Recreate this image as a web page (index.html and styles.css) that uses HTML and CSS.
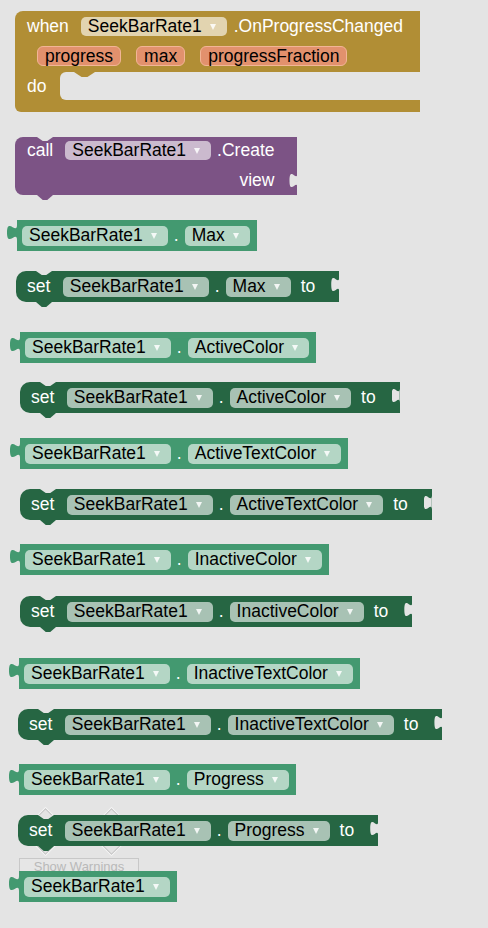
FILE: index.html
```html
<!DOCTYPE html>
<html>
<head>
<meta charset="utf-8">
<link rel="stylesheet" href="styles.css">
</head>
<body>
<div class="overlay">
  <div class="diamond d1"></div>
  <div class="diamond d2"></div>
  <div class="warn-btn">Show Warnings</div>
</div>
<div class="ws">
  <div class="blk event">
    <div class="ev-head"><span class="lbl kw">when</span><span class="fld">SeekBarRate1<i class="arr"></i></span><span class="lbl meth">.OnProgressChanged</span></div>
    <div class="ev-params"><span class="prm">progress</span><span class="prm">max</span><span class="prm">progressFraction</span></div>
    <div class="ev-do"><span class="lbl do">do</span><div class="slot"></div></div>
  </div>

  <div class="blk call">
    <div class="call-head"><span class="lbl kw">call</span><span class="fld">SeekBarRate1<i class="arr"></i></span><span class="lbl meth">.Create</span></div>
    <div class="call-arg"><span class="lbl">view</span></div>
  </div>

  <div class="blk getter g-max"><span class="fld">SeekBarRate1<i class="arr"></i></span><span class="dot">.</span><span class="fld">Max<i class="arr"></i></span></div>
  <div class="blk setter s-max"><span class="lbl kw">set</span><span class="fld">SeekBarRate1<i class="arr"></i></span><span class="dot">.</span><span class="fld">Max<i class="arr"></i></span><span class="lbl to">to</span></div>

  <div class="blk getter g-ac"><span class="fld">SeekBarRate1<i class="arr"></i></span><span class="dot">.</span><span class="fld">ActiveColor<i class="arr"></i></span></div>
  <div class="blk setter s-ac"><span class="lbl kw">set</span><span class="fld">SeekBarRate1<i class="arr"></i></span><span class="dot">.</span><span class="fld">ActiveColor<i class="arr"></i></span><span class="lbl to">to</span></div>

  <div class="blk getter g-atc"><span class="fld">SeekBarRate1<i class="arr"></i></span><span class="dot">.</span><span class="fld">ActiveTextColor<i class="arr"></i></span></div>
  <div class="blk setter s-atc"><span class="lbl kw">set</span><span class="fld">SeekBarRate1<i class="arr"></i></span><span class="dot">.</span><span class="fld">ActiveTextColor<i class="arr"></i></span><span class="lbl to">to</span></div>

  <div class="blk getter g-ic"><span class="fld">SeekBarRate1<i class="arr"></i></span><span class="dot">.</span><span class="fld">InactiveColor<i class="arr"></i></span></div>
  <div class="blk setter s-ic"><span class="lbl kw">set</span><span class="fld">SeekBarRate1<i class="arr"></i></span><span class="dot">.</span><span class="fld">InactiveColor<i class="arr"></i></span><span class="lbl to">to</span></div>

  <div class="blk getter g-itc"><span class="fld">SeekBarRate1<i class="arr"></i></span><span class="dot">.</span><span class="fld">InactiveTextColor<i class="arr"></i></span></div>
  <div class="blk setter s-itc"><span class="lbl kw">set</span><span class="fld">SeekBarRate1<i class="arr"></i></span><span class="dot">.</span><span class="fld">InactiveTextColor<i class="arr"></i></span><span class="lbl to">to</span></div>

  <div class="blk getter g-p"><span class="fld">SeekBarRate1<i class="arr"></i></span><span class="dot">.</span><span class="fld">Progress<i class="arr"></i></span></div>
  <div class="blk setter s-p"><span class="lbl kw">set</span><span class="fld">SeekBarRate1<i class="arr"></i></span><span class="dot">.</span><span class="fld">Progress<i class="arr"></i></span><span class="lbl to">to</span></div>

  <div class="blk getter g-last"><span class="fld">SeekBarRate1<i class="arr"></i></span></div>
</div>
</body>
</html>
```

FILE: styles.css
```css
* { box-sizing: border-box; }

body {
  margin: 0;
  width: 488px;
  height: 928px;
  overflow: hidden;
  position: relative;
  background: #e4e4e4;
  font-family: "Liberation Sans", Arial, sans-serif;
  font-size: 17.5px;
}

.ws {
  display: flex;
  flex-direction: column;
  align-items: flex-start;
  padding-top: 11px;
}

.blk {
  position: relative;
  z-index: 1;
  color: #fff;
  white-space: nowrap;
  line-height: 19px;
}

.lbl { white-space: nowrap; }

.fld {
  display: flex;
  align-items: center;
  height: 20px;
  padding: 0 11px 0 7px;
  border-radius: 5px;
  color: #000;
  white-space: nowrap;
}

.arr {
  display: block;
  width: 0;
  height: 0;
  margin-left: 8px;
  border-left: 3.5px solid transparent;
  border-right: 3.5px solid transparent;
  border-top: 6px solid rgba(255, 255, 255, 0.85);
}

.dot { margin: 0 6px; }

/* ---------- event block ---------- */
.event {
  margin-left: 15px;
  background: #b18e35;
  border-radius: 8px 0 0 6px;
  padding-bottom: 12px;
}
.event .fld { background: #e2d4b0; height: 19px; }
.ev-head {
  display: flex;
  align-items: center;
  height: 25px;
  padding: 6px 17px 0 12px;
}
.ev-head .kw { margin-right: 12px; }
.ev-head .meth { margin-left: 7px; }

.ev-params {
  display: flex;
  gap: 15px;
  margin-top: 10px;
  padding-left: 22px;
}
.prm {
  display: flex;
  align-items: center;
  height: 20px;
  padding: 0 7px;
  border: 1px solid #f2b596;
  border-radius: 6px;
  background: #e2916d;
  color: #000;
}

.ev-do {
  display: flex;
  margin-top: 6px;
}
.ev-do .do {
  display: flex;
  align-items: center;
  width: 45px;
  padding-left: 12px;
}
.slot {
  position: relative;
  flex: 1;
  height: 28px;
  background: #e4e4e4;
  border-radius: 6px 0 0 6px;
}
.slot::before {
  content: "";
  position: absolute;
  left: 14px;
  top: 0;
  width: 21px;
  height: 5px;
  background: #b18e35;
  clip-path: polygon(0 0, 100% 0, 64% 100%, 36% 100%);
}

/* ---------- call block ---------- */
.call {
  margin-left: 15px;
  margin-top: 25px;
  height: 58px;
  background: #7c5385;
  border-radius: 8px 0 0 8px;
}
.call .fld { background: #cbbace; height: 19px; }
.call-head {
  display: flex;
  align-items: center;
  height: 23px;
  padding: 4px 23px 0 12px;
}
.call-head .kw { margin-right: 12px; }
.call-head .meth { margin-left: 6px; }
.call-arg {
  display: flex;
  justify-content: flex-end;
  align-items: center;
  height: 30px;
  margin-top: 5px;
  padding-right: 23px;
}
.call::before,
.setter::before {
  content: "";
  position: absolute;
  top: 0;
  width: 16px;
  height: 4px;
  background: #e4e4e4;
  clip-path: polygon(0 0, 100% 0, 64% 100%, 36% 100%);
}
.call::before { left: 22px; }
.call::after,
.setter::after {
  content: "";
  position: absolute;
  bottom: -5px;
  width: 16px;
  height: 5px;
  clip-path: polygon(0 0, 100% 0, 64% 100%, 36% 100%);
}
.call::after { left: 22px; background: #7c5385; }
.call .call-arg::after,
.setter .to::after {
  content: "";
  position: absolute;
  right: 0;
  width: 8px;
  height: 16px;
  background: #e4e4e4;
  clip-path: path("M8,0 C8,10 0,-8 0,7.5 C0,23 8,5 8,15 Z");
}
.call .call-arg::after { top: 36px; }

/* ---------- getter ---------- */
.getter {
  display: flex;
  align-items: center;
  height: 31px;
  padding: 0 7px 0 5px;
  background: #439970;
}
.getter .fld { background: #b4d6c5; }
.getter::before {
  content: "";
  position: absolute;
  left: -10px;
  top: 5px;
  width: 11px;
  height: 16px;
  background: #439970;
  clip-path: path("M11,0 L10,0 C10,10 0,-8 0,7.5 C0,23 10,5 10,15 L11,15 Z");
}

/* ---------- setter ---------- */
.setter {
  display: flex;
  align-items: center;
  height: 31px;
  padding: 0 24px 0 11px;
  background: #266643;
  border-radius: 10px 0 0 10px;
}
.setter .fld { background: #a8c2b4; }
.setter .kw { margin-right: 12.5px; }
.setter .to { margin-left: 10px; }
.setter::before { left: 20px; }
.setter::after { left: 20px; background: #266643; }
.setter .to::after { top: 6px; }

/* ---------- block placement ---------- */
.g-max  { margin-left: 17px; margin-top: 25px; }
.s-max  { margin-left: 16px; margin-top: 20px; }
.g-ac   { margin-left: 20px; margin-top: 30px; }
.s-ac   { margin-left: 20px; margin-top: 19px; }
.g-atc  { margin-left: 20px; margin-top: 25px; }
.s-atc  { margin-left: 20px; margin-top: 20px; }
.g-ic   { margin-left: 20px; margin-top: 24px; }
.s-ic   { margin-left: 20px; margin-top: 21px; }
.g-itc  { margin-left: 19px; margin-top: 31px; }
.s-itc  { margin-left: 18px; margin-top: 20px; }
.g-p    { margin-left: 19px; margin-top: 24px; }
.s-p    { margin-left: 18px; margin-top: 20px; }
.g-last { margin-left: 19px; margin-top: 25px; }

/* ---------- warning indicator (under the blocks) ---------- */
.overlay {
  position: absolute;
  left: 0;
  top: 0;
  z-index: 0;
}
.diamond {
  position: absolute;
  top: 815px;
  width: 33px;
  height: 33px;
  border: 1px solid #c4c4c4;
  box-shadow: 1px 1px 0 #f4f4f4, -1px -1px 0 #f4f4f4;
  transform: rotate(45deg);
}
.d1 { left: 29px; }
.d2 { left: 95px; }
.warn-btn {
  position: absolute;
  left: 19px;
  top: 858px;
  width: 120px;
  height: 26px;
  padding-top: 0;
  border: 1px solid #c8c8c8;
  background: #e6e6e6;
  color: #b9b9b9;
  font-size: 13px;
  line-height: 15px;
  text-align: center;
}
```
